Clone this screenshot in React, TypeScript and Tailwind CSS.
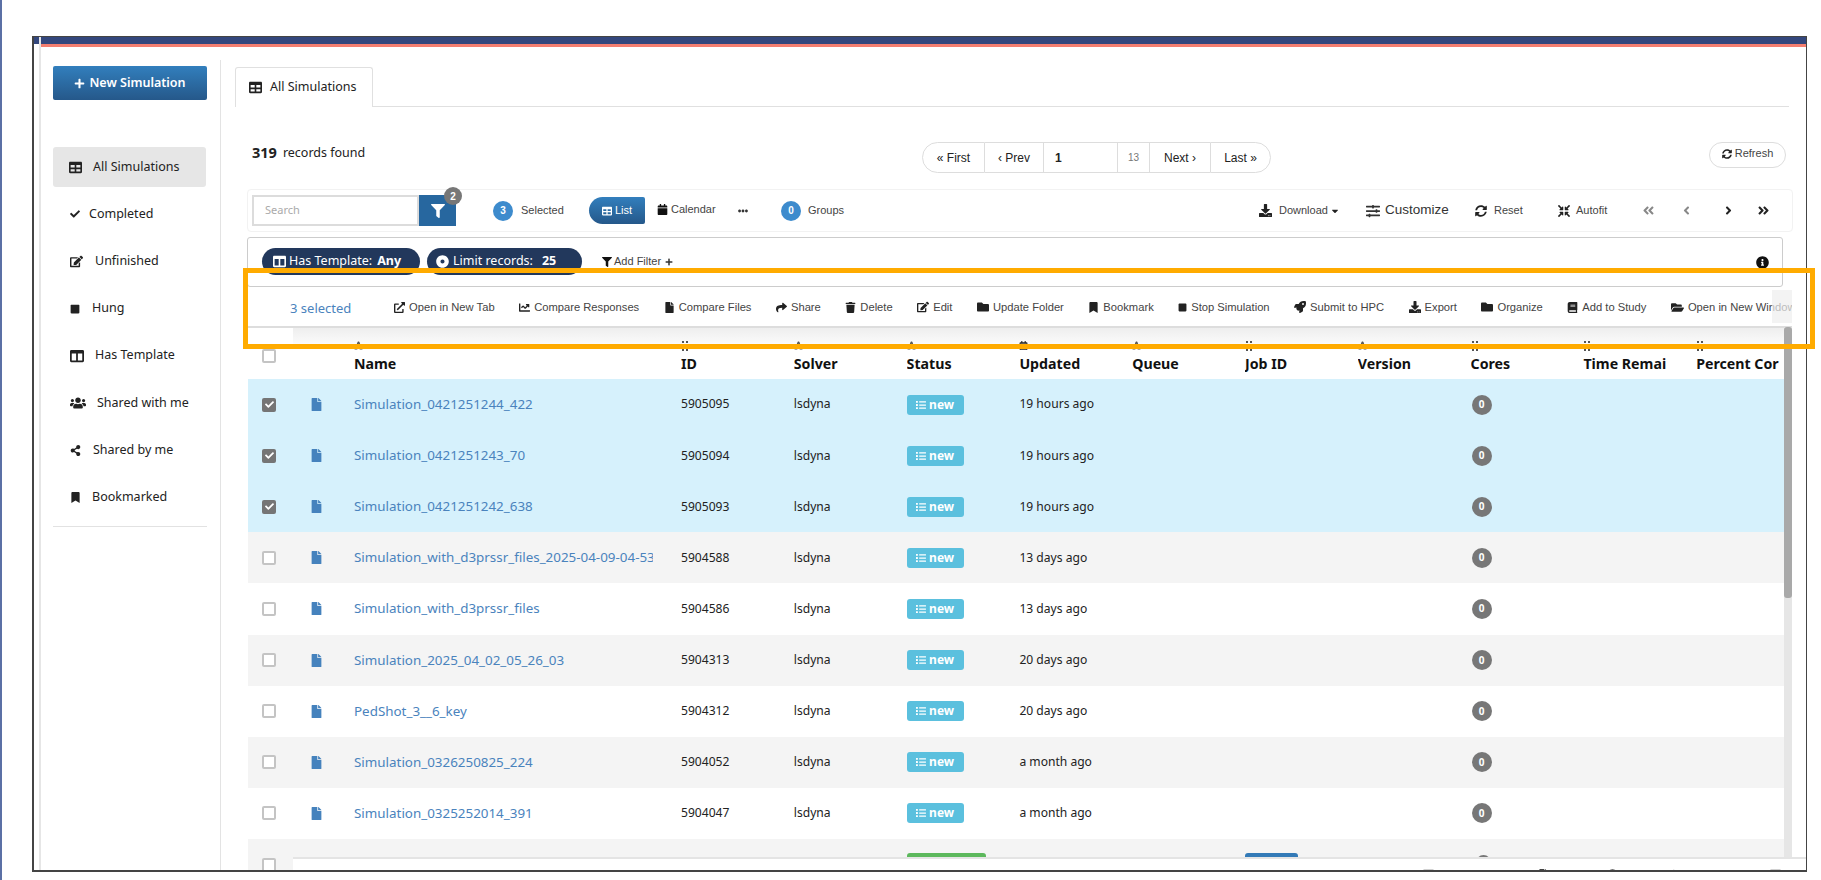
import React from "react";
import {
  FaTable, FaCheck, FaEdit, FaStop, FaColumns, FaUsers, FaShareAlt, FaBookmark, FaFilter,
  FaDownload, FaSlidersH, FaSyncAlt, FaCompressArrowsAlt, FaAngleDoubleLeft, FaAngleDoubleRight,
  FaAngleLeft, FaAngleRight, FaExternalLinkAlt, FaChartLine, FaFile, FaShare, FaTrash, FaFolder,
  FaRocket, FaBook, FaFolderOpen, FaInfoCircle, FaCalendar, FaEllipsisH, FaList, FaDotCircle,
  FaPlus, FaCaretDown, FaFont, FaRegCalendarAlt, FaQuestionCircle,
} from "react-icons/fa";

const nav = [
  { icon: <FaCheck size={10} />, label: "Completed", gap: "gap-[9px]" },
  { icon: <FaEdit size={13} />, label: "Unfinished", gap: "gap-[12px]" },
  { icon: <FaStop size={10} />, label: "Hung", gap: "gap-[12px]" },
  { icon: <FaColumns size={14} />, label: "Has Template", gap: "gap-[11px]" },
  { icon: <FaUsers size={16} />, label: "Shared with me", gap: "gap-[11px]" },
  { icon: <FaShareAlt size={11} />, label: "Shared by me", gap: "gap-[12px]" },
  { icon: <FaBookmark size={11} />, label: "Bookmarked", gap: "gap-[11px]" },
];

const actions = [
  { icon: <FaExternalLinkAlt size={11} />, label: "Open in New Tab" },
  { icon: <FaChartLine size={11} />, label: "Compare Responses" },
  { icon: <FaFile size={11} />, label: "Compare Files" },
  { icon: <FaShare size={11} />, label: "Share" },
  { icon: <FaTrash size={11} />, label: "Delete" },
  { icon: <FaEdit size={12} />, label: "Edit" },
  { icon: <FaFolder size={12} />, label: "Update Folder" },
  { icon: <FaBookmark size={11} />, label: "Bookmark" },
  { icon: <FaStop size={9} />, label: "Stop Simulation" },
  { icon: <FaRocket size={12} />, label: "Submit to HPC" },
  { icon: <FaDownload size={12} />, label: "Export" },
  { icon: <FaFolder size={12} />, label: "Organize" },
  { icon: <FaBook size={11} />, label: "Add to Study" },
  { icon: <FaFolderOpen size={13} />, label: "Open in New Window" },
];

const cols = [
  { label: "Name", kind: "a" },
  { label: "ID", kind: "d" },
  { label: "Solver", kind: "a" },
  { label: "Status", kind: "a" },
  { label: "Updated", kind: "c" },
  { label: "Queue", kind: "a" },
  { label: "Job ID", kind: "d" },
  { label: "Version", kind: "a" },
  { label: "Cores", kind: "d" },
  { label: "Time Remai", kind: "d" },
  { label: "Percent Cor", kind: "d" },
];

const rows = [
  { name: "Simulation_0421251244_422", id: "5905095", when: "19 hours ago", sel: true },
  { name: "Simulation_0421251243_70", id: "5905094", when: "19 hours ago", sel: true },
  { name: "Simulation_0421251242_638", id: "5905093", when: "19 hours ago", sel: true },
  { name: "Simulation_with_d3prssr_files_2025-04-09-04-53", id: "5904588", when: "13 days ago", sel: false },
  { name: "Simulation_with_d3prssr_files", id: "5904586", when: "13 days ago", sel: false },
  { name: "Simulation_2025_04_02_05_26_03", id: "5904313", when: "20 days ago", sel: false },
  { name: "PedShot_3__6_key", id: "5904312", when: "20 days ago", sel: false },
  { name: "Simulation_0326250825_224", id: "5904052", when: "a month ago", sel: false },
  { name: "Simulation_0325252014_391", id: "5904047", when: "a month ago", sel: false },
];

const grid = "grid grid-cols-[106px_327px_repeat(9,112.8px)_88px] items-center";
const arial = "font-[Liberation_Sans,Arial,sans-serif]";

function SortIcon({ kind }: { kind: string }) {
  if (kind === "a") return <FaFont size={9} className="text-[#555]" />;
  if (kind === "c") return <FaRegCalendarAlt size={9} className="text-[#222]" />;
  return (
    <svg width="8" height="10" viewBox="0 0 8 10" className="text-[#555]">
      <path fill="currentColor" d="M1 0h2v2H1zM5 0h2v2H5zM1 3h2v2H1zM5 3h2v2H5zM1 8h2v2H1zM5 8h2v2H5z" />
    </svg>
  );
}

function Box({ on }: { on: boolean }) {
  return on ? (
    <span className="flex h-[14px] w-[14px] items-center justify-center rounded-[2px] bg-[#757575] text-white">
      <FaCheck size={9} />
    </span>
  ) : (
    <span className="block h-[14px] w-[14px] rounded-[2px] border-2 border-[#c4c4c4] bg-white" />
  );
}

function Row({ r, i }: { r: (typeof rows)[number]; i: number }) {
  const bg = r.sel ? "bg-[#d6f1fc]" : i % 2 === 1 ? "bg-[#f4f4f4]" : "bg-white";
  return (
    <div className={`${grid} h-[51.12px] ${bg} text-[12.1px] text-[#222]`}>
      <div className="flex items-center">
        <span className="ml-[14px]"><Box on={r.sel} /></span>
        <FaFile size={13} className="ml-[34px] text-[#4582bd]" />
      </div>
      <div className="mb-[1px] mr-[28px] overflow-hidden whitespace-nowrap text-[13.4px] text-[#4a83bd]">{r.name}</div>
      <div>{r.id}</div>
      <div>lsdyna</div>
      <div>
        <span className="flex h-[20px] w-[57px] items-center justify-center gap-[3px] rounded-[3px] bg-[#5bc0de] text-[12px] font-bold text-white">
          <FaList size={10} />
          new
        </span>
      </div>
      <div>{r.when}</div>
      <div />
      <div />
      <div />
      <div className="pl-[1px]">
        <span className="flex h-[20px] w-[20px] items-center justify-center rounded-full bg-[#777] text-[10px] font-bold text-white">0</span>
      </div>
      <div />
      <div />
    </div>
  );
}

export default function App() {
  return (
    <div className="relative h-[880px] w-[1821px] overflow-hidden bg-white font-[Noto_Sans,Open_Sans,sans-serif] text-[12.5px] text-[#333]">
      <div className="absolute left-0 top-0 h-full w-[2px] bg-[#5b70a5]" />

      {/* top bar of the framed page */}
      <div className="absolute left-[33px] top-[37px] h-[7px] w-[1773px] bg-[#33477d]" />
      <div className="absolute left-[40px] top-[44px] h-[3px] w-[1766px] bg-[#f47e70]" />
      <div className="absolute left-[39px] top-[37px] h-[834px] w-[2px] bg-[#e6e6e6]" />

      {/* sidebar */}
      <aside className="absolute left-[53px] top-[66px] w-[154px]">
        <button className="flex h-[34px] w-[154px] items-center justify-center gap-[4px] rounded-[2px] bg-linear-to-b from-[#327fbd] to-[#25588a] text-[12.5px] font-semibold text-white">
          <FaPlus size={11} />
          New Simulation
        </button>
        <div className="mt-[47px] flex h-[40px] w-[153px] items-center gap-[11px] rounded-[3px] bg-[#e6e6e6] pl-[16px] text-[#222]">
          <FaTable size={13} />
          All Simulations
        </div>
        {nav.map((n) => (
          <div key={n.label} className={`mt-[7.2px] flex h-[40px] items-center pl-[17px] text-[#222] ${n.gap}`}>
            {n.icon}
            {n.label}
          </div>
        ))}
        <div className="mt-[9px] h-[1px] w-[154px] bg-[#e2e2e2]" />
      </aside>
      <div className="absolute left-[220px] top-[60px] h-[811px] w-[1px] bg-[#e3e3e3]" />

      {/* tab strip */}
      <div className="absolute left-[235px] top-[106px] h-[1px] w-[1554px] bg-[#e0e0e0]" />
      <div className="absolute left-[235px] top-[67px] flex h-[40px] w-[138px] items-center gap-[8px] rounded-t-[3px] border border-b-0 border-[#e0e0e0] bg-white pl-[13px] text-[#222]">
        <FaTable size={13} />
        All Simulations
      </div>

      {/* records */}
      <div className="absolute left-[252px] top-[143px] flex h-[20px] items-center gap-[6px] text-[#222]">
        <b className="text-[14.5px]">319</b>
        <span>records found</span>
      </div>

      {/* pager */}
      <div className={`absolute left-[922px] top-[142px] flex h-[31px] items-stretch ${arial} text-[12px] text-[#222]`}>
        <div className="flex w-[63px] items-center justify-center rounded-l-full border border-[#ddd]">« First</div>
        <div className="flex w-[59px] items-center justify-center border-y border-r border-[#ddd]">‹ Prev</div>
        <div className="flex w-[73px] items-center border-y border-[#ddd] pl-[11px] font-bold">1</div>
        <div className="flex w-[33px] items-center justify-center border border-[#ddd] text-[10px] text-[#777]">13</div>
        <div className="flex w-[60px] items-center justify-center border-y border-[#ddd]">Next ›</div>
        <div className="flex w-[61px] items-center justify-center rounded-r-full border border-[#ddd]">Last »</div>
      </div>
      <div className={`absolute left-[1709px] top-[142px] flex h-[26px] w-[77px] items-center justify-center gap-[3px] rounded-full border border-[#ddd] pb-[3px] ${arial} text-[11px] text-[#444]`}>
        <FaSyncAlt size={10} className="text-[#222]" />
        Refresh
      </div>

      {/* toolbar */}
      <div className={`absolute left-[247px] top-[189px] flex h-[43px] w-[1546px] items-center rounded-[4px] border border-[#f2f2f2] bg-white pl-[4px] ${arial} text-[11px] text-[#444]`}>
        <div className="flex h-[31px] w-[167px] items-center border-2 border-[#dcdcdc] pl-[11px] font-[Noto_Sans,sans-serif] text-[#aaa]">Search</div>
        <div className="relative flex h-[31px] w-[37px] items-center justify-center bg-[#27679f] text-white">
          <FaFilter size={14} />
          <span className="absolute left-[25px] top-[-8px] flex h-[18px] w-[18px] items-center justify-center rounded-full bg-[#777] text-[10px] font-bold">2</span>
        </div>
        <span className="ml-[37px] flex h-[20px] w-[20px] items-center justify-center rounded-full bg-[#3d8bcd] text-[10px] font-bold text-white">3</span>
        <span className="ml-[8px] w-[68px]">Selected</span>
        <div className="flex h-[27px] w-[56px] items-center gap-[3px] rounded-l-[14px] rounded-r-[2px] bg-linear-to-b from-[#327fbd] to-[#25588a] pl-[13px] text-white">
          <FaTable size={10} />
          List
        </div>
        <div className="ml-[12px] flex w-[81px] items-center gap-[3px] pb-[3px]">
          <FaCalendar size={11} className="text-[#111]" />
          Calendar
        </div>
        <div className="w-[43px]"><FaEllipsisH size={10} className="text-[#333]" /></div>
        <span className="flex h-[20px] w-[20px] items-center justify-center rounded-full bg-[#3d8bcd] text-[10px] font-bold text-white">0</span>
        <span className="ml-[7px] w-[451px]">Groups</span>
        <div className="flex w-[107px] items-center gap-[7px]">
          <FaDownload size={13} className="text-[#222]" />
          <span className="flex items-center gap-[2px]">Download <FaCaretDown size={10} className="text-[#222]" /></span>
        </div>
        <div className="flex w-[109px] items-center gap-[5px] text-[13.5px] text-[#333]">
          <FaSlidersH size={14} />
          Customize
        </div>
        <div className="flex w-[83px] items-center gap-[7px]">
          <FaSyncAlt size={12} className="text-[#222]" />
          Reset
        </div>
        <div className="flex w-[84px] items-center gap-[6px]">
          <FaCompressArrowsAlt size={12} className="text-[#222]" />
          Autofit
        </div>
        <div className="w-[38px]"><FaAngleDoubleLeft size={13} className="text-[#888]" /></div>
        <div className="w-[42px]"><FaAngleLeft size={13} className="text-[#888]" /></div>
        <div className="w-[35px]"><FaAngleRight size={13} className="text-[#222]" /></div>
        <div><FaAngleDoubleRight size={13} className="text-[#222]" /></div>
      </div>

      {/* filter box */}
      <div className="absolute left-[247px] top-[237px] flex h-[50px] w-[1536px] rounded-[3px] border border-[#ccc] bg-white pl-[14px] pt-[10px]">
        <div className="flex h-[27px] w-[158px] items-center gap-[3px] rounded-full bg-[#22385c] pl-[11px] text-white">
          <FaColumns size={13} />
          Has Template: <b className="ml-[2px]">Any</b>
        </div>
        <div className="ml-[7px] flex h-[27px] w-[155px] items-center gap-[4px] rounded-full bg-[#22385c] pl-[9px] text-white">
          <FaDotCircle size={13} />
          Limit records: <b className="ml-[5px]">25</b>
        </div>
        <div className={`ml-[20px] flex h-[27px] items-center gap-[2px] ${arial} text-[11px] text-[#444]`}>
          <FaFilter size={10} className="text-[#111]" />
          Add Filter
          <FaPlus size={8} className="ml-[2px] text-[#333]" />
        </div>
        <FaInfoCircle size={13} className="absolute right-[13px] top-[18px] text-[#111]" />
      </div>

      {/* table area */}
      <div className="absolute left-[293px] top-[328px] h-[21px] w-[1491px] bg-linear-to-b from-[#eeeeee] to-white" />
      <div className="absolute left-[248px] top-[341px] h-[530px] w-[1536px] overflow-hidden">
        <div className={`${grid} h-[38px] !items-stretch`}>
          <div className="pl-[14px] pt-[8px]"><Box on={false} /></div>
          {cols.map((c) => (
            <div key={c.label} className="flex flex-col justify-between overflow-hidden pb-[5px]">
              <SortIcon kind={c.kind} />
              <span className="whitespace-nowrap text-[14.2px] font-bold leading-[20px] text-[#111]">{c.label}</span>
            </div>
          ))}
        </div>
        {rows.map((r, i) => <Row key={r.id} r={r} i={i} />)}
        <div className={`${grid} h-[51.12px] bg-[#f4f4f4]`}>
          <div className="pl-[14px]"><Box on={false} /></div>
          <div />
          <div />
          <div />
          <div><span className="block h-[23px] w-[79px] rounded-[3px] bg-[#5cb85c]" /></div>
          <div />
          <div />
          <div><span className="block h-[23px] w-[53px] rounded-[3px] bg-[#337ab7]" /></div>
          <div />
          <div className="pl-[5px]"><span className="block h-[20px] w-[15px] rounded-full bg-[#777]" /></div>
          <div />
          <div />
        </div>
      </div>

      {/* action bar */}
      <div className={`absolute left-[248px] top-[287px] flex h-[41px] w-[1544px] items-center overflow-hidden border-b-2 border-[#ddd] bg-white pt-[2px] ${arial} text-[11.2px] text-[#444]`}>
        <span className="ml-[42px] mt-[3px] w-[104px] shrink-0 font-[Noto_Sans,sans-serif] text-[13px] text-[#4a83bd]">3 selected</span>
        <div className="flex items-center gap-[24.5px] whitespace-nowrap">
          {actions.map((a) => (
            <span key={a.label} className="flex shrink-0 items-center gap-[4px]">
              <span className="text-[#222]">{a.icon}</span>
              {a.label}
            </span>
          ))}
        </div>
      </div>
      <div className="absolute left-[1772px] top-[290px] h-[33px] w-[20px] bg-[#eeeeee]/70" />

      {/* scrollbar */}
      <div className="absolute left-[1784px] top-[327px] h-[530px] w-[8px] bg-[#e6e6e6]">
        <div className="h-[271px] w-[8px] rounded-[3px] bg-[#a9a9a9]" />
      </div>

      {/* footer */}
      <div className={`absolute left-[293px] top-[857px] h-[14px] w-[1513px] overflow-hidden border-t-2 border-[#e4e4e4] bg-white ${arial} text-[11px] text-[#444]`}>
        <span className="absolute left-[448px] top-[7px] whitespace-nowrap">© 2024-2025 ANSYS, Inc. All rights reserved.</span>
        <span className="absolute left-[730px] top-[7px] whitespace-nowrap">v 2025-04-24 2025-02-07</span>
        <span className="absolute left-[1130px] top-[7px] flex items-center gap-[3px]"><FaTable size={11} />Get Support</span>
        <span className="absolute left-[1245px] top-[7px] flex items-center gap-[3px]"><FaFile size={11} />Docs</span>
        <span className="absolute left-[1314px] top-[7px] flex items-center gap-[3px]"><FaQuestionCircle size={11} />Help</span>
        <span className="absolute left-[1374px] top-[7px] flex items-center gap-[3px]"><FaShare size={11} />Subscribe</span>
        <span className="absolute left-[1477px] top-[7px] flex items-center gap-[3px]"><FaTable size={11} />To</span>
      </div>

      {/* outer frame of the screenshot */}
      <div className="pointer-events-none absolute left-[32px] top-[36px] h-[836px] w-[1775px] border-y-[1px] border-b-2 border-l-2 border-r-[1px] border-[#444]" />

      {/* highlight */}
      <div className="pointer-events-none absolute left-[243px] top-[268px] h-[81px] w-[1572px] border-[5px] border-[#ffab00]" />
    </div>
  );
}
